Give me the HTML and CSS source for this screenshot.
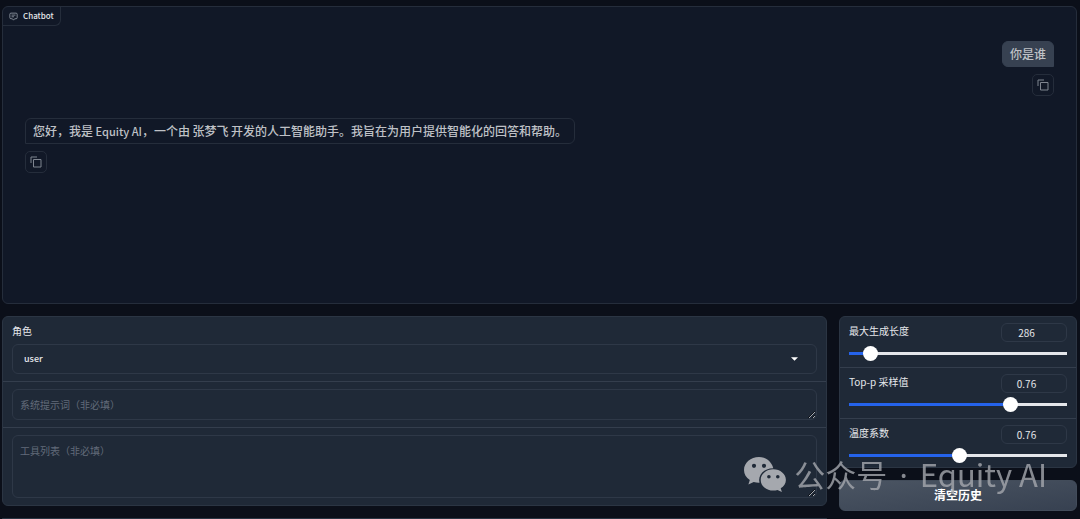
FILE: index.html
```html
<!DOCTYPE html>
<html lang="zh-CN">
<head>
    <meta charset="UTF-8">
    <meta name="viewport" content="width=device-width, initial-scale=1.0">
    <title>Equity AI</title>
    <link rel="stylesheet" href="styles.css">
</head>
<body>
    <main class="app">
        <section class="chatbot">
            <div class="chat-label">
                <svg viewBox="0 0 16 16" width="9" height="9" aria-hidden="true">
                    <path fill="none" stroke="currentColor" stroke-width="1.400" d="M6 12H3.500a2 2 0 0 1-2-2V4a2 2 0 0 1 2-2h9a2 2 0 0 1 2 2v6a2 2 0 0 1-2 2H10L8 14.500L6 12M4.500 5.500h7M4.500 8.500h4.500"/>
                </svg>
                <span>Chatbot</span>
            </div>
            <div class="messages">
                <div class="message-row user">
                    <div class="message">你是谁</div>
                    <button class="copy" type="button" aria-label="复制">
                        <svg viewBox="0 0 12 12" width="12" height="12"><path d="M3.500 3.500h7.500v7.500h-7.500zM1 7V1h6" fill="none" stroke="currentColor"/></svg>
                    </button>
                </div>
                <div class="message-row bot">
                    <div class="message">您好，我是<span class="latin"> Equity AI</span>，一个由<span class="latin"> </span>张梦飞<span class="latin"> </span>开发的人工智能助手。我旨在为用户提供智能化的回答和帮助。</div>
                    <button class="copy" type="button" aria-label="复制">
                        <svg viewBox="0 0 12 12" width="12" height="12"><path d="M3.500 3.500h7.500v7.500h-7.500zM1 7V1h6" fill="none" stroke="currentColor"/></svg>
                    </button>
                </div>
            </div>
        </section>

        <div class="columns">
            <div class="column inputs">
                <div class="group">
                    <div class="block">
                        <label for="role">角色</label>
                        <div class="select-wrap">
                            <select id="role">
                                <option>user</option>
                                <option>observation</option>
                            </select>
                            <svg class="arrow" viewBox="0 0 8 4" width="7" height="4" aria-hidden="true"><path fill="currentColor" d="M0 0h8L4 4z"/></svg>
                        </div>
                    </div>
                    <div class="block">
                        <textarea class="short" aria-label="系统提示词" placeholder="系统提示词（非必填）"></textarea>
                    </div>
                    <div class="block">
                        <textarea class="tall" aria-label="工具列表" placeholder="工具列表（非必填）"></textarea>
                    </div>
                </div>
                <div class="group next"></div>
            </div>

            <div class="column settings">
                <div class="group">
                    <div class="block slider">
                        <div class="slider-head">
                            <label for="max-length">最大生成长度</label>
                            <input type="number" value="286" aria-label="最大生成长度 数值">
                        </div>
                        <input type="range" id="max-length" min="0" max="4096" step="1" value="286" style="--fill: 10%">
                    </div>
                    <div class="block slider">
                        <div class="slider-head">
                            <label for="top-p">Top-p 采样值</label>
                            <input type="number" value="0.76" step="0.01" aria-label="Top-p 采样值 数值">
                        </div>
                        <input type="range" id="top-p" min="0" max="1" step="0.01" value="0.76" style="--fill: 76%">
                    </div>
                    <div class="block slider">
                        <div class="slider-head">
                            <label for="temperature">温度系数</label>
                            <input type="number" value="0.76" step="0.01" aria-label="温度系数 数值">
                        </div>
                        <input type="range" id="temperature" min="0" max="1.5" step="0.01" value="0.76" style="--fill: 51%">
                    </div>
                </div>
                <button class="clear" type="button">清空历史</button>
            </div>
        </div>
    </main>

    <div class="watermark">
        <svg viewBox="0 0 42 35" width="42" height="35" aria-hidden="true">
            <path fill="currentColor" fill-rule="evenodd" d="M15 0C6.700 0 0 5.700 0 13c0 4.200 2.200 7.700 5.800 10.100L4.400 27.500l5.300-2.600c1.900.6 3.800.9 5.800.8C13.700 18 20 11.200 29.300 11.200 27.700 4.600 21.800 0 15 0ZM10 6.700a2.100 2.100 0 1 1 0 4.200 2.100 2.100 0 0 1 0-4.200Zm10 0a2.100 2.100 0 1 1 0 4.200 2.100 2.100 0 0 1 0-4.200Z"/>
            <path fill="currentColor" fill-rule="evenodd" d="M29.300 12.200c-7 0-12.600 4.800-12.600 10.700s5.600 10.700 12.600 10.700c1.400 0 2.900-.2 4.200-.6l4.400 2-1.200-3.700c3.200-2 5.200-5 5.200-8.400 0-5.900-5.600-10.700-12.600-10.700Zm-4.400 5.700a1.800 1.800 0 1 1 0 3.600 1.800 1.800 0 0 1 0-3.600Zm8.900 0a1.800 1.800 0 1 1 0 3.600 1.800 1.800 0 0 1 0-3.600Z"/>
        </svg>
        <span>公众号<span class="dot"> · </span>Equity AI</span>
    </div>

    <script>
        // keep the blue part of each slider and its number box in step with the thumb
        document.querySelectorAll("input[type=range]").forEach(range => {
            const number = range.parentElement.querySelector("input[type=number]");
            function update() {
                const part = range.value / range.max;
                range.style.setProperty("--fill", part * 100 + "%");
            }
            range.addEventListener("input", () => {
                number.value = range.value;
                update();
            });
            number.addEventListener("input", () => {
                range.value = number.value;
                update();
            });
        });
    </script>
</body>
</html>
```
FILE: styles.css
```css
* {
    box-sizing: border-box;
}
html {
    color-scheme: dark;
    scrollbar-width: none;
}
body {
    margin: 0;
    background-color: #0b0f19;
    color: #e5e7eb;
    font-family: "Noto Sans CJK SC", sans-serif;
    font-size: 10px;
    line-height: 16px;
}
button, input, select, textarea {
    font: inherit;
    color: inherit;
}
.app {
    padding: 6px 3px 0 2px;
}

/* chat */
.chatbot {
    height: 298px;
    border: 1px solid #252d3b;
    border-radius: 6px;
    background-color: #111827;
    overflow: hidden;
}
.chat-label {
    display: flex;
    align-items: center;
    gap: 5px;
    width: fit-content;
    height: 19px;
    padding: 0 6px;
    border: solid #252d3b;
    border-width: 0 1px 1px 0;
    border-bottom-right-radius: 6px;
    font-size: 8px;
    font-weight: 500;
}
.chat-label svg {
    color: #9ca3af;
}
.messages {
    display: flex;
    flex-direction: column;
    gap: 22px;
    padding: 15px 22px;
}
.message-row {
    display: flex;
    flex-direction: column;
    align-items: flex-start;
    gap: 7px;
}
.message-row.user {
    align-items: flex-end;
}
.message {
    padding: 4px 7px;
    border: 1px solid #252d3b;
    border-radius: 6px 6px 6px 0;
    color: #bfc1c6;
    font-size: 12px;
    font-weight: 500;
    line-height: 16px;
}
.latin {
    font-size: 11px;
}
.user .message {
    border-color: #374151;
    border-radius: 6px 6px 0 6px;
    background-color: #374151;
}
.copy {
    display: grid;
    place-items: center;
    width: 22px;
    height: 22px;
    padding: 0;
    border: 1px solid #252d3b;
    border-radius: 5px;
    background: none;
    color: #7f8590;
    cursor: pointer;
}

/* controls below the chat */
.columns {
    display: flex;
    align-items: flex-start;
    gap: 12px;
    margin-top: 12px;
}
.column {
    display: flex;
    flex-direction: column;
    gap: 12px;
    min-width: 0;
}
.inputs {
    flex: 1;
}
.settings {
    flex: 0 0 238px;
}
.group {
    border: 1px solid #2b3543;
    border-radius: 6px;
    background-color: #1f2937;
}
.next {
    height: 1px;
    border-width: 1px 0 0;
}
.block {
    padding: 7px 9px;
}
.block + .block {
    border-top: 1px solid #343e4d;
}
label {
    display: block;
}
.inputs label {
    line-height: 14px;
}
.select-wrap {
    position: relative;
    margin-top: 6px;
}
select {
    display: block;
    width: 100%;
    height: 30px;
    padding: 0 11px;
    border: 1px solid #2e3847;
    border-radius: 6px;
    background: none;
    appearance: none;
    font-size: 9px;
    font-weight: 500;
}
option {
    background-color: #1f2937;
}
.arrow {
    position: absolute;
    top: 13px;
    right: 19px;
    color: #fff;
    pointer-events: none;
}
textarea {
    display: block;
    width: 100%;
    padding: 7px;
    border: 1px solid #2e3847;
    border-radius: 6px;
    background: none;
    resize: vertical;
}
textarea::placeholder {
    color: #626b7a;
}
.short {
    height: 31px;
}
.tall {
    height: 63px;
}

/* sliders */
.slider {
    padding: 6px 9px;
}
.slider:last-child {
    padding-bottom: 4px;
}
.slider-head {
    display: flex;
    justify-content: space-between;
}
input[type="number"] {
    width: 66px;
    height: 19px;
    padding: 0;
    border: 1px solid #2e3847;
    border-radius: 6px;
    background: none;
    text-align: center;
}
input[type="number"]::-webkit-inner-spin-button {
    width: 8px;
    opacity: 0;
}
input[type="range"] {
    display: block;
    width: 100%;
    height: 15px;
    margin: 4px 0 0;
    background: linear-gradient(to right, #2563eb var(--fill), #e5e7eb var(--fill)) center / 100% 3px no-repeat;
    appearance: none;
    cursor: pointer;
}
input[type="range"]::-webkit-slider-thumb {
    width: 15px;
    height: 15px;
    border-radius: 50%;
    background-color: #fff;
    appearance: none;
}
.clear {
    height: 31px;
    padding: 0 0 2px;
    border: 1px solid #424c5a;
    border-radius: 6px;
    background: linear-gradient(to bottom right, #4b5563, #374151);
    color: #fff;
    font-size: 12px;
    font-weight: 700;
    cursor: pointer;
}

/* floats over the lower right corner */
.watermark {
    position: fixed;
    right: 33px;
    bottom: 24px;
    display: flex;
    align-items: center;
    gap: 8px;
    color: #a5a8ae;
    font-size: 31px;
    line-height: 40px;
    white-space: nowrap;
    pointer-events: none;
}
.watermark > span {
    opacity: 0.8;
}
.dot {
    padding: 0 4px;
    font-family: "Noto Sans", sans-serif;
}
```
